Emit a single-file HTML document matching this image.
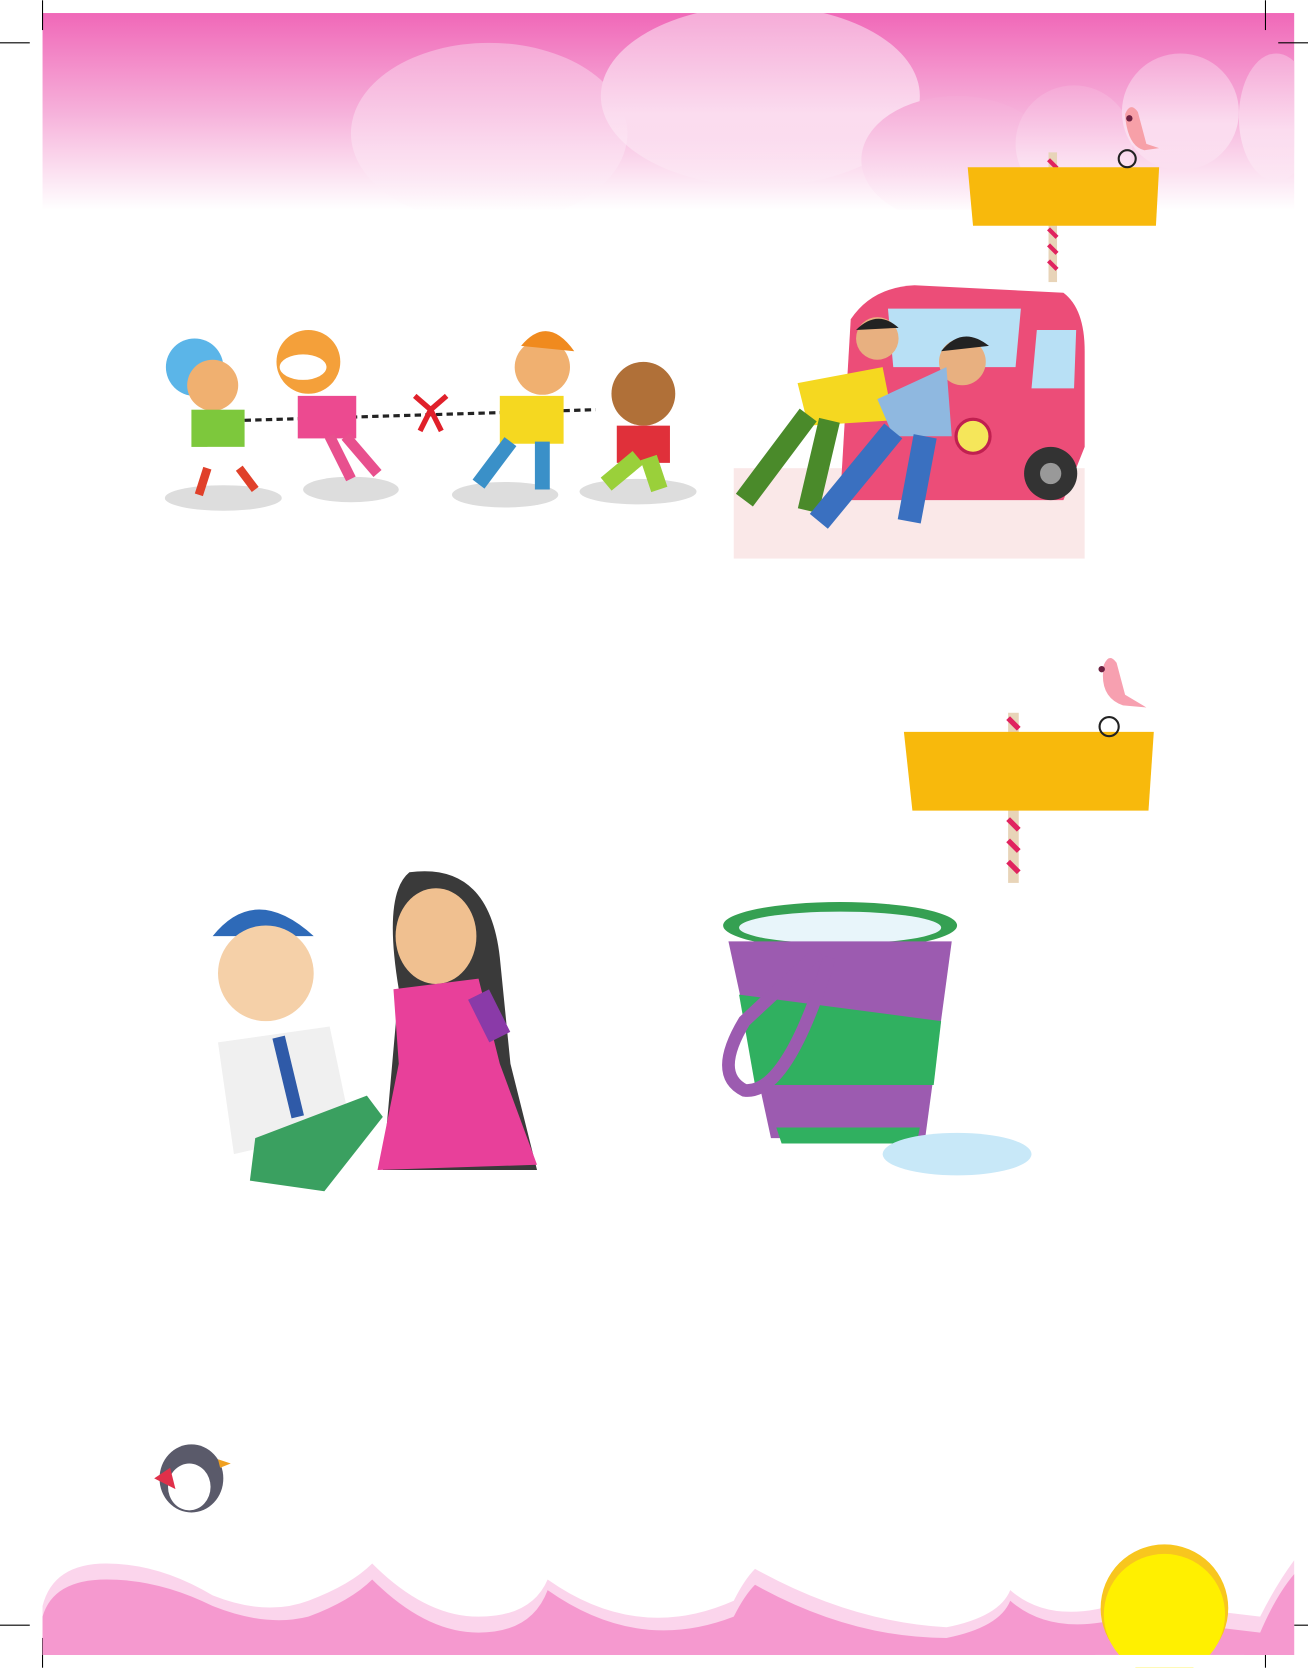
<!DOCTYPE html>
<html><head><meta charset="utf-8"><style>
html,body{margin:0;padding:0;background:#fff;}
svg{display:block;}
</style></head><body>
<svg width="1308" height="1668" viewBox="0 0 1230 1568" xmlns="http://www.w3.org/2000/svg">
<defs>
<linearGradient id="tg" x1="0" y1="0" x2="0" y2="1">
<stop offset="0" stop-color="#f068b8"/><stop offset="0.5" stop-color="#f6b0da"/><stop offset="1" stop-color="#ffffff"/></linearGradient>
<linearGradient id="cg" x1="0" y1="0" x2="0" y2="1">
<stop offset="0" stop-color="#f5a8d6"/><stop offset="0.6" stop-color="#fbdcef"/><stop offset="1" stop-color="#ffffff" stop-opacity="0"/></linearGradient>
<clipPath id="tc"><rect x="40" y="12" width="1177" height="185"/></clipPath>
</defs>
<rect x="40" y="12" width="1177" height="185" fill="url(#tg)"/>
<g fill="url(#cg)" clip-path="url(#tc)">
<ellipse cx="460" cy="125" rx="130" ry="85"/>
<ellipse cx="715" cy="90" rx="150" ry="85"/>
<ellipse cx="900" cy="150" rx="90" ry="60"/>
<ellipse cx="1010" cy="135" rx="55" ry="55"/>
<ellipse cx="1110" cy="105" rx="55" ry="55"/>
<ellipse cx="1200" cy="110" rx="35" ry="60"/>
</g>
<g stroke="#000" stroke-width="1">
<line x1="40" y1="0" x2="40" y2="28"/><line x1="0" y1="40" x2="28" y2="40"/>
<line x1="1190" y1="0" x2="1190" y2="28"/><line x1="1202" y1="40" x2="1230" y2="40"/>
<line x1="40" y1="1540" x2="40" y2="1568"/><line x1="0" y1="1528" x2="28" y2="1528"/>
<line x1="1190" y1="1540" x2="1190" y2="1568"/><line x1="1202" y1="1528" x2="1230" y2="1528"/>
</g>
<rect x="986" y="143" width="8" height="122" fill="#e8d4b8"/>
<g stroke="#e0235f" stroke-width="4"><line x1="986" y1="150" x2="994" y2="158"/><line x1="986" y1="215" x2="994" y2="223"/><line x1="986" y1="230" x2="994" y2="238"/><line x1="986" y1="245" x2="994" y2="253"/></g>
<polygon points="910,157 1090,157 1087,212 915,212" fill="#f8b90c"/>
<g transform="translate(1058,97)"><path d="M0,10 Q5,-2 12,8 L20,38 L32,42 L18,44 Q2,40 0,10Z" fill="#f7a0a8"/><circle cx="4" cy="14" r="3" fill="#6b2040"/><circle cx="2" cy="52" r="8" fill="none" stroke="#222" stroke-width="2"/></g>
<rect x="948" y="670" width="10" height="160" fill="#e8d4b8"/>
<g stroke="#e0235f" stroke-width="5"><line x1="948" y1="675" x2="958" y2="685"/><line x1="948" y1="770" x2="958" y2="780"/><line x1="948" y1="790" x2="958" y2="800"/><line x1="948" y1="810" x2="958" y2="820"/></g>
<polygon points="850,688 1085,688 1080,762 858,762" fill="#f8b90c"/>
<g transform="translate(1038,615)"><path d="M0,10 Q5,-2 12,8 L20,38 L40,50 L18,48 Q-5,40 0,10Z" fill="#f7a0b0"/><circle cx="-2" cy="14" r="3" fill="#6b2040"/><circle cx="5" cy="68" r="9" fill="none" stroke="#222" stroke-width="2"/></g>
<ellipse cx="210" cy="468" rx="55" ry="12" fill="#ddd"/><ellipse cx="330" cy="460" rx="45" ry="12" fill="#ddd"/><ellipse cx="475" cy="465" rx="50" ry="12" fill="#ddd"/><ellipse cx="600" cy="462" rx="55" ry="12" fill="#ddd"/>
<line x1="230" y1="395" x2="560" y2="385" stroke="#222" stroke-width="3" stroke-dasharray="6 4"/>
<path d="M390,372 L405,385 L395,405 M420,372 L405,385 L415,405" stroke="#e0202a" stroke-width="5" fill="none"/>
<circle cx="183" cy="345" r="27" fill="#5bb5e8"/><circle cx="200" cy="362" r="24" fill="#f0b070"/><rect x="180" y="385" width="50" height="35" fill="#7dc83c"/><rect x="195" y="420" width="35" height="20" fill="#fff"/><path d="M195,440 l-8,25 M225,440 l15,20" stroke="#e0402a" stroke-width="8"/>
<circle cx="290" cy="340" r="30" fill="#f4a03a"/><ellipse cx="285" cy="345" rx="22" ry="12" fill="#fff"/><rect x="280" y="372" width="55" height="40" fill="#ec4a90"/><path d="M310,410 l20,40 M325,410 l30,35" stroke="#e8508e" stroke-width="10"/>
<circle cx="510" cy="345" r="26" fill="#f0b070"/><path d="M490,325 Q515,295 540,330Z" fill="#f08a1e"/><rect x="470" y="372" width="60" height="45" fill="#f5d820"/><path d="M480,415 l-30,40 M510,415 l0,45" stroke="#3a90c8" stroke-width="14"/>
<circle cx="605" cy="370" r="30" fill="#b07038"/><rect x="580" y="400" width="50" height="35" fill="#e0303a"/><path d="M600,430 l-30,25 M610,430 l10,30" stroke="#9ad03a" stroke-width="16"/>
<rect x="690" y="440" width="330" height="85" fill="#f7d8d8" opacity="0.6"/>
<path d="M790,470 L800,300 Q820,270 860,268 L1000,275 Q1020,290 1020,330 L1020,420 L1000,470Z" fill="#ec4d78"/>
<path d="M835,290 L960,290 L955,345 L840,345Z" fill="#b8e0f5"/><path d="M975,310 L1012,310 L1010,365 L970,365Z" fill="#b8e0f5"/>
<circle cx="915" cy="410" r="16" fill="#f5e65a" stroke="#c02050" stroke-width="3"/><circle cx="988" cy="445" r="25" fill="#333"/><circle cx="988" cy="445" r="10" fill="#999"/>
<circle cx="825" cy="318" r="20" fill="#e8b080"/><path d="M805,310 Q825,290 845,308Z" fill="#222"/><path d="M750,360 L830,345 L840,395 L760,400Z" fill="#f5d820"/><path d="M760,390 L700,470 M780,395 L760,480" stroke="#4a8a2a" stroke-width="20"/>
<circle cx="905" cy="340" r="22" fill="#e8b080"/><path d="M885,330 Q905,305 930,325Z" fill="#222"/><path d="M825,375 L890,345 L895,410 L840,410Z" fill="#8fb8e0"/><path d="M840,405 L770,490 M870,410 L855,490" stroke="#3a70c0" stroke-width="22"/>
<path d="M385,820 Q460,810 470,900 L480,1000 L505,1100 L360,1100 L375,930 Q360,840 385,820Z" fill="#3a3a3a"/>
<ellipse cx="410" cy="880" rx="38" ry="45" fill="#f0c090"/>
<path d="M370,930 L450,920 L470,1000 L505,1095 L355,1100 L375,1000Z" fill="#e8409a"/><path d="M450,935 l20,40" stroke="#8a3aa8" stroke-width="22"/>
<path d="M200,880 Q240,830 295,880Z" fill="#2e6ab8"/><ellipse cx="250" cy="915" rx="45" ry="45" fill="#f5d0a8"/>
<path d="M205,980 L310,965 L330,1060 L220,1085Z" fill="#f0f0f0"/><path d="M262,975 L280,1050" stroke="#2f5aa8" stroke-width="12"/>
<path d="M240,1070 L345,1030 L360,1050 L305,1120 L235,1110Z" fill="#3aa060"/>
<ellipse cx="790" cy="870" rx="110" ry="22" fill="#35a052"/><ellipse cx="790" cy="872" rx="95" ry="15" fill="#e8f5fa"/>
<path d="M685,885 L895,885 L870,1070 L725,1070Z" fill="#9c5bb0"/>
<path d="M695,935 L885,960 L878,1020 L710,1020Z" fill="#30b060"/>
<path d="M730,1060 L865,1060 L862,1075 L735,1075Z" fill="#30b060"/>
<path d="M770,895 L700,960 Q670,1010 700,1025 Q740,1030 780,900" fill="none" stroke="#9c5bb0" stroke-width="12"/>
<ellipse cx="900" cy="1085" rx="70" ry="20" fill="#c8e8f8"/>
<ellipse cx="180" cy="1390" rx="30" ry="32" fill="#5a5a6a"/><ellipse cx="178" cy="1398" rx="20" ry="22" fill="#fff"/><path d="M145,1390 l15,-10 l5,20Z" fill="#e0304a"/><path d="M205,1372 l12,4 l-10,4Z" fill="#f0a020"/>
<path d="M40,1510 Q50,1470 100,1470 Q150,1470 200,1500 Q250,1520 290,1505 Q330,1490 350,1470 Q400,1520 450,1520 Q500,1520 515,1485 Q600,1545 690,1505 Q700,1485 710,1475 Q800,1525 890,1530 Q940,1520 950,1495 Q990,1530 1060,1505 L1185,1520 Q1200,1490 1217,1467 L1217,1556 L40,1556Z" fill="#fbd5ec"/>
<path d="M40,1520 Q50,1485 100,1485 Q150,1485 200,1510 Q250,1530 290,1520 Q330,1505 350,1485 Q400,1535 450,1535 Q500,1535 515,1495 Q600,1555 690,1520 Q700,1500 710,1490 Q800,1540 890,1540 Q940,1530 950,1505 Q990,1540 1060,1520 L1185,1535 Q1200,1500 1217,1480 L1217,1556 L40,1556Z" fill="#f599cf"/>
<circle cx="1095" cy="1512" r="60" fill="#f8c61e"/><circle cx="1095" cy="1518" r="57" fill="#fff000"/>
<rect x="1030" y="1556" width="140" height="12" fill="#fff"/>
</svg>
</body></html>
